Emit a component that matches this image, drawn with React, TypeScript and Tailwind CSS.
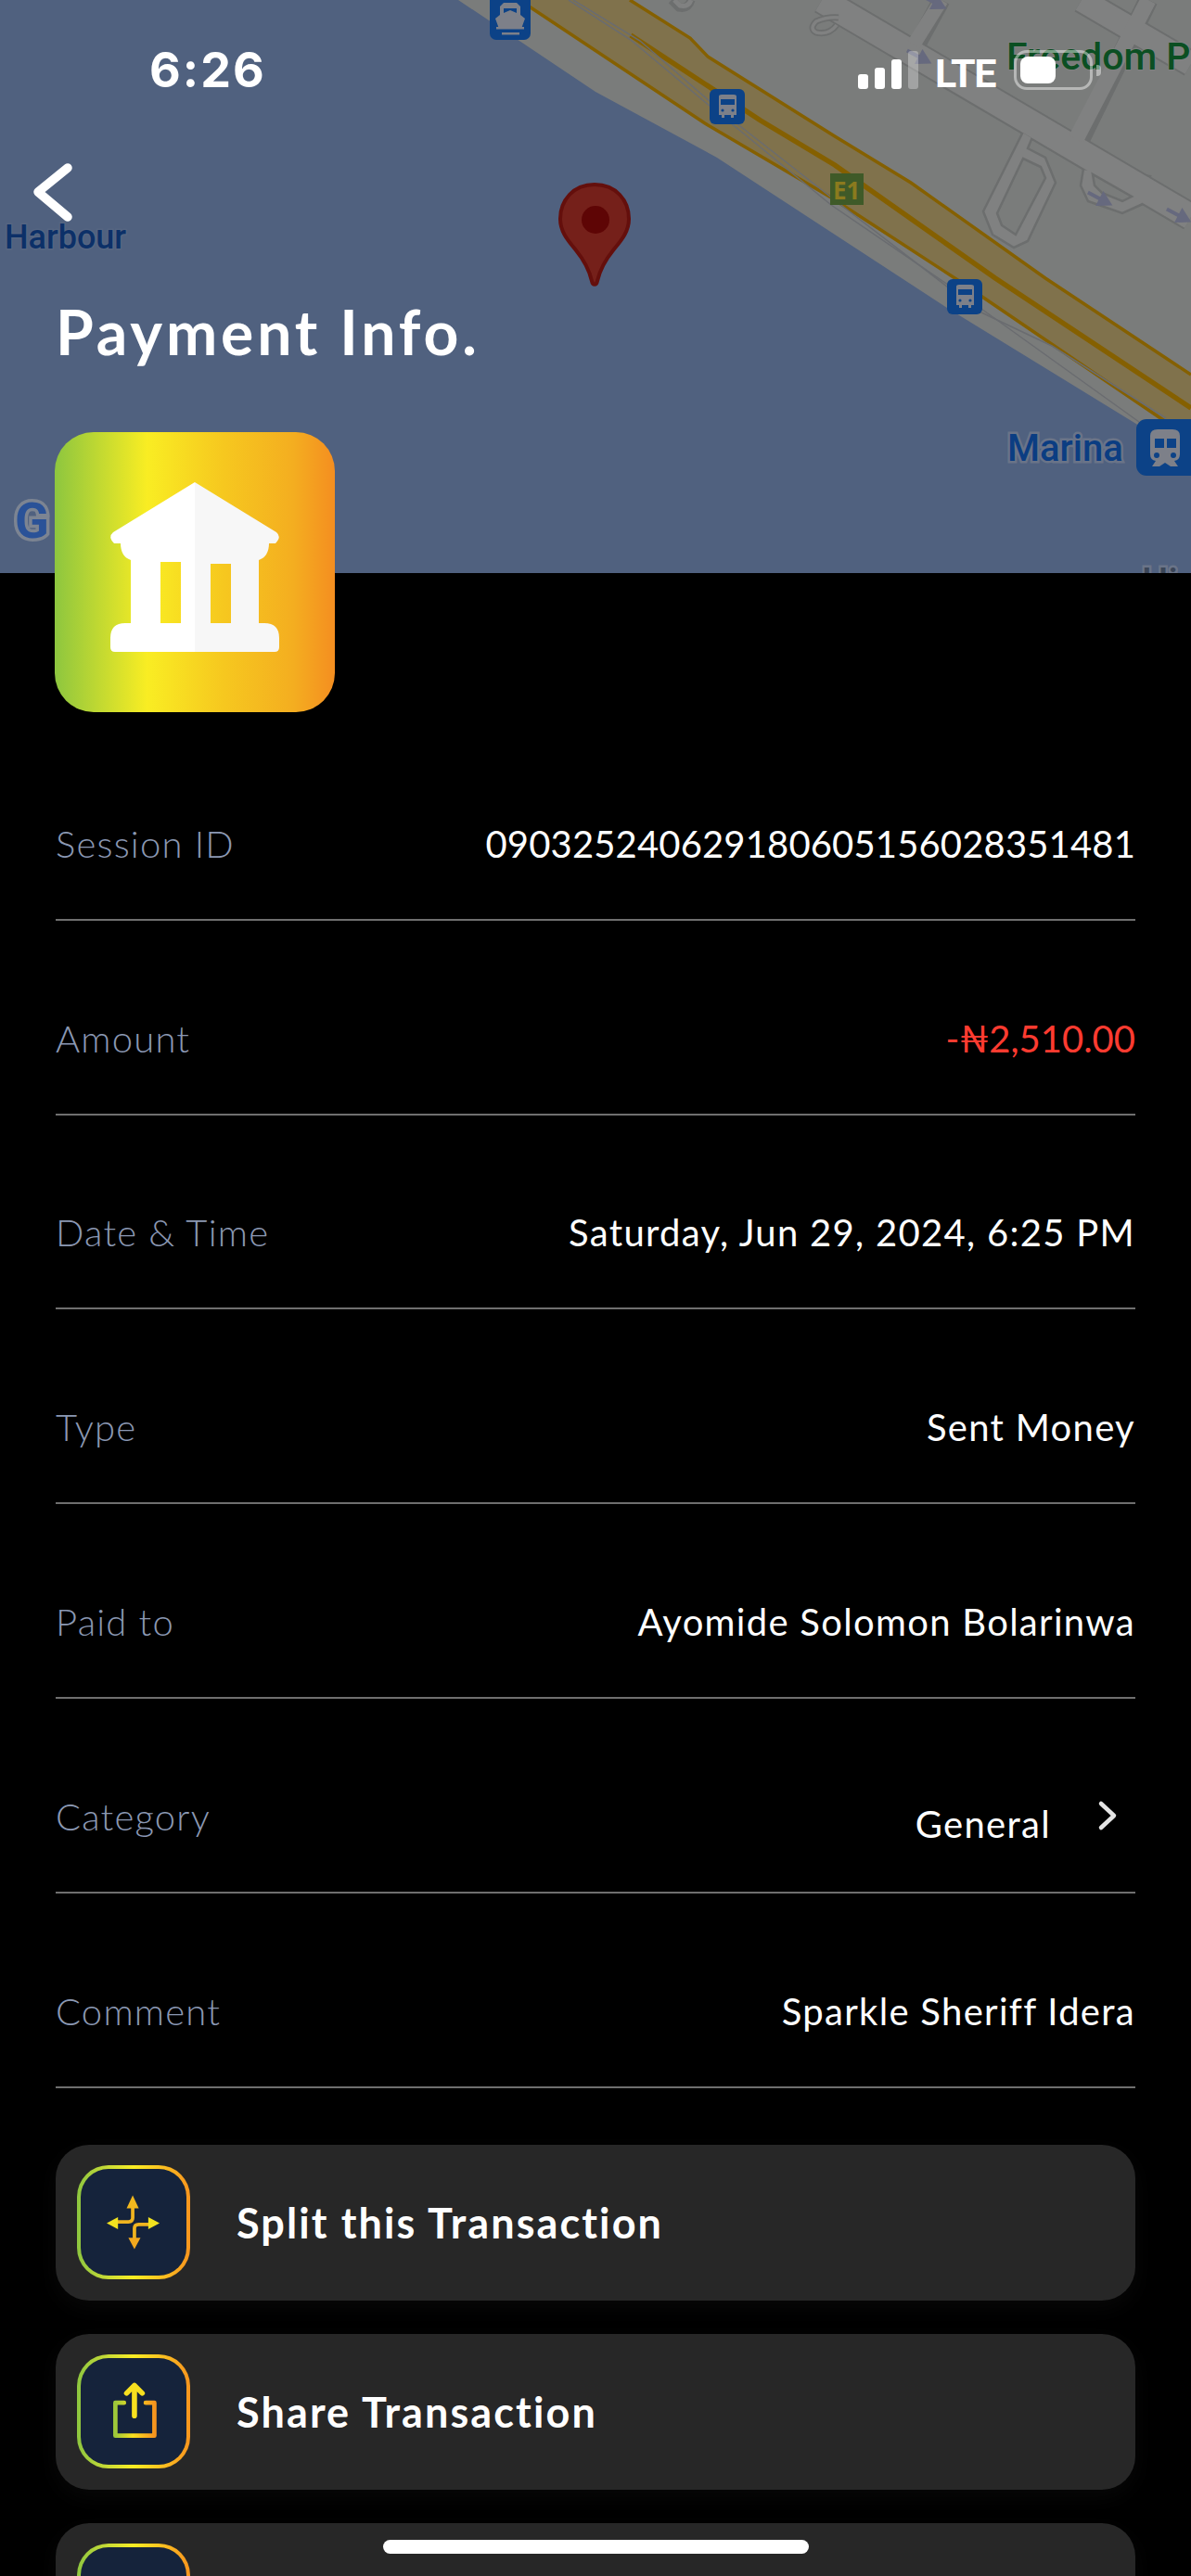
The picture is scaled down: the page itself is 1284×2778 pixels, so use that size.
import React from "react";

const G = "from-[#8dc63f] via-[#f9ed23] to-[#f7941e]";

function Pin() {
  return (
    <g>
      <path d="M641 199 C618 199 604 216 604 236 C604 250 612 259 621 270 C630 281 635 290 638 303 C639 308 643 308 644 303 C647 290 652 281 661 270 C670 259 678 250 678 236 C678 216 664 199 641 199 Z" fill="#75201a" stroke="#640f0c" strokeWidth="4" />
      <circle cx="642" cy="237" r="15" fill="#5e0505" />
    </g>
  );
}

function Bus({ x, y }: { x: number; y: number }) {
  return (
    <g transform={`translate(${x} ${y})`}>
      <rect width="38" height="38" rx="6" fill="#0c4287" />
      <path d="M10 8 Q10 6 13 6 H26 Q29 6 29 8 V28 H26 V31 H23 V28 H16 V31 H13 V28 H10 Z" fill="#7d8089" />
      <rect x="12" y="11" width="15" height="6" fill="#0c4287" />
      <circle cx="14" cy="23" r="1.6" fill="#0c4287" />
      <circle cx="25" cy="23" r="1.6" fill="#0c4287" />
    </g>
  );
}

function Arrow({ x, y }: { x: number; y: number }) {
  return (
    <g transform={`translate(${x} ${y}) rotate(28)`} fill="#66697e">
      <rect x="-16" y="-2" width="16" height="4" />
      <path d="M-2 -9 L14 0 L-2 9 Z" />
    </g>
  );
}

function MapBackdrop() {
  return (
    <svg className="absolute left-0 top-0 w-[1284px] h-[618px]" viewBox="0 0 1284 618" fill="none">
      <rect width="1284" height="618" fill="#50617f" />
      <path d="M494 0 L642 99 L773 170 L1021 332 L1228 459 L1284 496 V0 Z" fill="#7a7c7b" />
      {/* streets */}
      <g strokeLinecap="butt">
        <path d="M886 0 L1284 234" stroke="#6c6e6e" strokeWidth="31" />
        <path d="M1166 0 L1284 69" stroke="#6c6e6e" strokeWidth="29" />
        <path d="M1015 0 L985 55" stroke="#6c6e6e" strokeWidth="19" />
        <path d="M1238 0 L1160 160" stroke="#6c6e6e" strokeWidth="21" />
        <path d="M1103 142 L1060 228 L1070 253 L1093 267 L1108 260 L1138 197 L1127 170 L1108 160 L1113 148 Z" fill="#808181" stroke="#6c6e6e" strokeWidth="2.5" />
        <path d="M1168 182 L1165 200 L1173 217 L1210 230 L1232 220 L1240 190 Z" fill="#808181" stroke="#6c6e6e" strokeWidth="2.5" />
        <path d="M886 0 L1284 234" stroke="#808181" strokeWidth="27" />
        <path d="M1166 0 L1284 69" stroke="#808181" strokeWidth="25" />
        <path d="M1015 0 L985 48" stroke="#808181" strokeWidth="15" />
        <path d="M1238 0 L1160 150" stroke="#808181" strokeWidth="17" />
        <path d="M1103 171 L1075 230 L1080 243 L1095 253 L1127 192 L1122 180 Z" fill="#7a7c7b" stroke="#6c6e6e" strokeWidth="2.5" />
        <path d="M1178 188 L1180 200 L1188 208 L1210 217 L1220 212 Z" fill="#7a7c7b" stroke="#6c6e6e" strokeWidth="2.5" />
        <path d="M904 19 Q892 18 880 23 Q872 31 880 35 Q894 38 902 27" stroke="#6c6e6e" strokeWidth="7" />
        <path d="M904 19 Q892 18 880 23 Q872 31 880 35 Q894 38 902 27" stroke="#808181" strokeWidth="3.5" />
        <path d="M745 0 Q742 10 732 8 L724 0" stroke="#6c6e6e" strokeWidth="9" />
        <path d="M745 0 Q742 8 733 6 L727 0" stroke="#808181" strokeWidth="5" />
      </g>
      <Arrow x={992} y={62} />
      <Arrow x={1008} y={3} />
      <Arrow x={1187} y={215} />
      <Arrow x={1272} y={233} />
      {/* highway */}
      <path d="M560 0 L760 133 L896 213 L1031 301 L1257 455 L1284 473 V404 L1127 300 L982 197 L763 61 L744 41 L679 0 Z" fill="#80724c" />
      <path d="M679 0 L744 41 L763 61 L900 147 L982 197 L1127 300 L1284 404" stroke="#856000" strokeWidth="3.5" />
      <path d="M680 38 L820 130 L900 178 L1073 300 L1284 440" stroke="#856000" strokeWidth="5.5" />
      <path d="M560 0 L760 133 L896 213 L1031 301 L1257 455 L1284 473" stroke="#856000" strokeWidth="3.5" />
      <g stroke="#6a6c70" strokeWidth="1.5">
        <path d="M613 0 L680 43 L760 110 L896 221 L1019 305 L1228 455" />
        <path d="M618 0 L690 44 L780 122 L904 219 L1056 336 L1134 373 L1257 451" />
      </g>
      {/* POIs */}
      <g>
        <rect x="528" y="-6" width="44" height="49" rx="7" fill="#0c4287" />
        <path d="M539 7 L543 3 H557 L561 7 V16 L566 20 L562 31 H538 L534 20 L539 16 Z" fill="#7d8089" />
        <path d="M543 9 H557 V14 L550 11 L543 14 Z" fill="#0c4287" />
        <rect x="535" y="29" width="30" height="2.5" fill="#7d8089" />
        <rect x="541" y="35" width="19" height="2.5" fill="#7d8089" />
      </g>
      <Bus x={765} y={96} />
      <Bus x={1021} y={301} />
      <rect x="895" y="187" width="36" height="34" fill="#3f5a28" />
      <text x="898" y="215" fontFamily="'Open Sans', sans-serif" fontWeight="700" fontSize="26" fill="#8b7a1e">E1</text>
      <g>
        <rect x="1225" y="452" width="70" height="61" rx="11" fill="#0c4287" />
        <path d="M1240 470 Q1240 463 1248 463 H1264 Q1272 463 1272 470 V490 Q1272 496 1266 497 L1270 503 H1262 L1256 499 L1250 503 H1242 L1246 497 Q1240 496 1240 490 Z" fill="#7d8089" />
        <rect x="1245" y="473" width="10" height="10" fill="#0c4287" />
        <rect x="1258" y="473" width="10" height="10" fill="#0c4287" />
        <circle cx="1247" cy="491" r="3" fill="#0c4287" />
        <circle cx="1265" cy="491" r="3" fill="#0c4287" />
      </g>
      <Pin />
      <g fontFamily="Roboto, sans-serif" fontWeight="500" style={{ paintOrder: "stroke" }}>
        <text x="5" y="268" fontSize="36" fill="#0c3068" stroke="#566682" strokeWidth="3">Harbour</text>
        <text x="1086" y="497" fontSize="40" fill="#0b3d82" stroke="#6a7488" strokeWidth="5">Marina</text>
        <text x="1085" y="75" fontSize="41" fill="#0b4f22" stroke="#808181" strokeWidth="2">Freedom P</text>
        <text x="1231" y="641" fontSize="40" fill="#3b4658" stroke="#6a7488" strokeWidth="5">Hi</text>
        <text x="16" y="580" fontSize="54" fontWeight="700" fill="#2a5298" stroke="#7c8492" strokeWidth="7">G</text>
      </g>
    </svg>
  );
}

function StatusBar() {
  return (
    <div className="relative flex items-start h-[168px] text-white">
      <div className="absolute left-[161px] top-[44px] text-[52px] leading-[64px] font-bold tracking-[2px] font-['Inter',sans-serif]">6:26</div>
      <div className="absolute left-[925px] top-[54px] flex items-end gap-[7px] h-[42px]">
        <div className="w-[11px] h-[16px] rounded-[3px] bg-white" />
        <div className="w-[11px] h-[23px] rounded-[3px] bg-white" />
        <div className="w-[11px] h-[32px] rounded-[3px] bg-white" />
        <div className="w-[11px] h-[41px] rounded-[3px] bg-white/30" />
      </div>
      <div className="absolute left-[1008px] top-[54px] text-[43px] leading-[50px] font-bold tracking-[-1.5px] font-['Roboto',sans-serif]">LTE</div>
      <div className="absolute left-[1093px] top-[54px] w-[85px] h-[43px] rounded-[14px] border-[3px] border-white/45" />
      <div className="absolute left-[1100px] top-[61px] w-[38px] h-[29px] rounded-[8px] bg-white" />
      <div className="absolute left-[1182px] top-[70px] w-[5px] h-[12px] rounded-r-[4px] bg-white/45" />
    </div>
  );
}

function BankIcon() {
  return (
    <div className="ml-[59px] w-[302px] h-[302px] rounded-[42px] bg-[linear-gradient(90deg,#8dc63f_0%,#f9ed23_33%,#f6c81f_60%,#f4ae20_85%,#f48e20_100%)] overflow-hidden">
      <svg viewBox="59 466 302 302" className="w-full h-full">
        <path fillRule="evenodd" d="M210 520 L122 574 Q116 579 123 586 H130 Q130 600 141 604 V672 H135 Q119 672 119 688 V698 Q119 703 124 703 H210 Z M173 606 H195 V672 H173 Z" fill="#ffffff" />
        <path fillRule="evenodd" d="M210 520 L298 574 Q304 579 297 586 H290 Q290 600 279 604 V672 H285 Q301 672 301 688 V698 Q301 703 296 703 H210 Z M227 608 H249 V672 H227 Z" fill="#f7f7f7" />
      </svg>
    </div>
  );
}

function Row({ label, children }: { label: string; children: React.ReactNode }) {
  return (
    <div className="flex h-[209.8px] items-end justify-between border-b-2 border-[#6f6f6f] pb-[57px]">
      <span className="text-[40px] leading-[48px] font-light tracking-[1.2px] text-[#8b98b3] font-['Lato',sans-serif]">{label}</span>
      {children}
    </div>
  );
}

const value = "text-[40px] leading-[48px] tracking-[1.3px] text-white font-['Lato',sans-serif]";

function SplitIcon() {
  return (
    <svg viewBox="0 0 122 122" className="w-full h-full" fill="none">
      <g stroke="#f0b41f" strokeWidth="4">
        <path d="M60 42 V56 Q60 60.5 55 60.5 H42" />
        <path d="M62 82 V68 Q62 63.5 67 63.5 H80" />
      </g>
      <path d="M60 30 L67 45 H53 Z" fill="#f2b81e" />
      <path d="M62 92 L55 79 H69 Z" fill="#f2a81e" />
      <path d="M30 62 L43 55 V69 Z" fill="#f2e21f" />
      <path d="M91 62 L78 55 V69 Z" fill="#f2e21f" />
    </svg>
  );
}

function ShareIcon() {
  return (
    <svg viewBox="0 0 122 122" className="w-full h-full" fill="none">
      <defs>
        <linearGradient id="sh" x1="40" y1="0" x2="85" y2="0" gradientUnits="userSpaceOnUse">
          <stop offset="0" stopColor="#9cc83a" />
          <stop offset="0.45" stopColor="#f9e01f" />
          <stop offset="1" stopColor="#f7941e" />
        </linearGradient>
      </defs>
      <path d="M50 51 H40 V89 H85 V51 H75" stroke="url(#sh)" strokeWidth="5" strokeLinejoin="round" strokeLinecap="round" />
      <path d="M62 66 V31 M53 40 L62 31 L71 40" stroke="#f7e01f" strokeWidth="6" strokeLinecap="round" strokeLinejoin="round" />
    </svg>
  );
}

function Card({ title, icon }: { title?: string; icon?: React.ReactNode }) {
  return (
    <div className="flex items-center h-[168px] shrink-0 rounded-[36px] bg-[#272727] pl-[23px] gap-[50px] shadow-[0_8px_24px_rgba(255,255,255,0.03)]">
      <div className={`w-[122px] h-[123px] shrink-0 rounded-[34px] p-[4px] bg-gradient-to-r ${G}`}>
        <div className="w-full h-full rounded-[30px] bg-[#15233b]">{icon}</div>
      </div>
      {title ? <span className="text-[45px] leading-[54px] font-bold tracking-[2.1px] text-white font-['Lato',sans-serif]">{title}</span> : null}
    </div>
  );
}

export default function App() {
  return (
    <div className="relative w-[1284px] h-[2778px] overflow-hidden bg-black">
      <MapBackdrop />
      <header className="relative">
        <StatusBar />
        <svg className="absolute left-[36px] top-[174px] w-[46px] h-[66px]" viewBox="36 174 46 66" fill="none">
          <path d="M73 181 L41 207 L73 234" stroke="#fff" strokeWidth="9.5" strokeLinecap="round" strokeLinejoin="round" />
        </svg>
        <h1 className="ml-[60px] mt-[150px] text-[66px] leading-[80px] font-bold tracking-[3.9px] text-white font-['Lato',sans-serif]">Payment Info.</h1>
        <div className="h-[68px]" />
        <BankIcon />
      </header>
      <main className="mt-[15px] px-[60px]">
        <Row label="Session ID"><span className="text-[40px] leading-[48px] tracking-[0.15px] text-white font-['Lato',sans-serif]">090325240629180605156028351481</span></Row>
        <Row label="Amount"><span className="text-[40px] leading-[48px] text-[#ff3b30] font-['Lato',sans-serif]">-₦2,510.00</span></Row>
        <Row label="Date & Time"><span className={value}>Saturday, Jun 29, 2024, 6:25 PM</span></Row>
        <Row label="Type"><span className={value}>Sent Money</span></Row>
        <Row label="Paid to"><span className={value}>Ayomide Solomon Bolarinwa</span></Row>
        <Row label="Category">
          <div className="flex items-center gap-[48px] mr-[19px]">
            <span className={`${value} translate-y-[8px]`}>General</span>
            <svg width="24" height="34" viewBox="0 0 24 34" fill="none" className="-translate-y-[1px]">
              <path d="M6 4 L20 17 L6 30" stroke="#e4e4e4" strokeWidth="4.5" strokeLinecap="round" strokeLinejoin="round" />
            </svg>
          </div>
        </Row>
        <Row label="Comment"><span className={value}>Sparkle Sheriff Idera</span></Row>
        <div className="mt-[61px] flex flex-col gap-[36px]">
          <Card title="Split this Transaction" icon={<SplitIcon />} />
          <Card title="Share Transaction" icon={<ShareIcon />} />
          <Card />
        </div>
      </main>
      <div className="absolute left-[413px] top-[2739px] w-[459px] h-[15px] rounded-full bg-white" />
    </div>
  );
}
